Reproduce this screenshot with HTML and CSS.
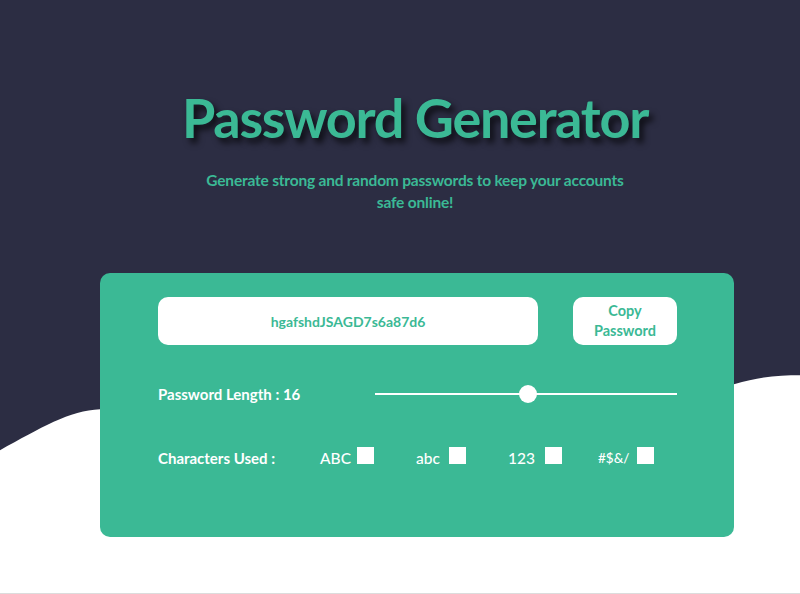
FILE: index.html
```html
<!DOCTYPE html>
<html>
<head>
<meta charset="utf-8">
<link rel="stylesheet" href="styles.css">
</head>
<body>
<svg class="wave" viewBox="0 0 800 594" preserveAspectRatio="none" aria-hidden="true">
  <path d="M0,451 C40,429 70,411 100,410 C300,400 500,400 734,385 C760,377 780,376 800,376 L800,594 L0,594 Z" fill="#ffffff"/>
</svg>
<main class="page">
  <h1 class="title">Password Generator</h1>
  <p class="subtitle">Generate strong and random passwords to keep your accounts safe online!</p>
  <section class="card">
    <div class="row-top">
      <div class="output">hgafshdJSAGD7s6a87d6</div>
      <button class="copy">Copy<br>Password</button>
    </div>
    <div class="row-length">
      <span class="label">Password Length : 16</span>
      <div class="slider"><span class="track"></span><span class="thumb"></span></div>
    </div>
    <div class="row-chars">
      <span class="label label-chars">Characters Used :</span>
      <span class="opt opt-abc">ABC <span class="box"></span></span>
      <span class="opt opt-lower">abc <span class="box"></span></span>
      <span class="opt opt-num">123 <span class="box"></span></span>
      <span class="opt opt-sym">#$&amp;/ <span class="box"></span></span>
    </div>
  </section>
</main>
</body>
</html>
```
FILE: styles.css
```css
html, body {
  margin: 0;
  padding: 0;
}
body {
  width: 800px;
  height: 594px;
  background: #2c2d43;
  position: relative;
  overflow: hidden;
  font-family: Lato, "Liberation Sans", sans-serif;
  border-bottom: 1px solid #dcdcdc;
  box-sizing: border-box;
}
.wave {
  position: absolute;
  left: 0;
  top: 0;
  width: 800px;
  height: 593px;
  z-index: 0;
}
.page {
  position: relative;
  z-index: 1;
  display: flex;
  flex-direction: column;
  align-items: center;
  padding-top: 84px;
}
.title {
  margin: 0 0 0 30px;
  font-size: 54px;
  line-height: 68px;
  font-weight: 700;
  letter-spacing: -1.3px;
  color: #3bb995;
  text-shadow: 4px 5px 6px rgba(0,0,0,0.7);
}
.subtitle {
  margin: 17px 0 0 0;
  width: 470px;
  text-align: center;
  font-size: 15.5px;
  line-height: 22px;
  font-weight: 700;
  letter-spacing: -0.2px;
  color: #3bb995;
  padding-left: 30px;
  box-sizing: border-box;
}
.card {
  align-self: flex-start;
  margin: 60px 0 0 100px;
  width: 634px;
  height: 264px;
  box-sizing: border-box;
  background: #3bb995;
  border-radius: 10px;
  padding: 24px 57px 0 58px;
}
.row-top {
  display: flex;
  justify-content: space-between;
}
.output {
  width: 380px;
  height: 48px;
  background: #fff;
  border-radius: 10px;
  display: flex;
  align-items: center;
  justify-content: center;
  color: #3bb995;
  font-size: 14px;
  font-weight: 700;
}
.copy {
  width: 104px;
  height: 48px;
  background: #fff;
  border: none;
  border-radius: 10px;
  color: #3bb995;
  font-family: inherit;
  font-size: 14.5px;
  font-weight: 700;
  line-height: 20px;
  padding: 0;
}
.row-length {
  display: flex;
  align-items: center;
  justify-content: space-between;
  margin-top: 38px;
  height: 22px;
}
.label {
  color: #fff;
  font-size: 15px;
  font-weight: 700;
}
.slider {
  position: relative;
  width: 302px;
  height: 18px;
  display: flex;
  align-items: center;
}
.track {
  display: block;
  width: 100%;
  height: 2px;
  background: #fff;
}
.thumb {
  position: absolute;
  left: 144px;
  top: 0;
  width: 18px;
  height: 18px;
  border-radius: 50%;
  background: #fff;
}
.row-chars {
  display: flex;
  align-items: center;
  margin-top: 42px;
  height: 22px;
}
.label-chars {
  width: 162px;
  flex: none;
}
.opt {
  display: flex;
  align-items: center;
  gap: 6px;
  color: #fff;
  font-size: 15.5px;
  font-weight: 500;
  flex: none;
}
.opt-abc { width: 96px; }
.opt-lower { width: 92px; gap: 9px; }
.opt-num { width: 90px; gap: 10px; }
.opt-sym { font-size: 13.5px; gap: 8px; }
.box {
  display: inline-block;
  width: 17px;
  height: 17px;
  background: #fff;
  margin-top: -5px;
}
```
